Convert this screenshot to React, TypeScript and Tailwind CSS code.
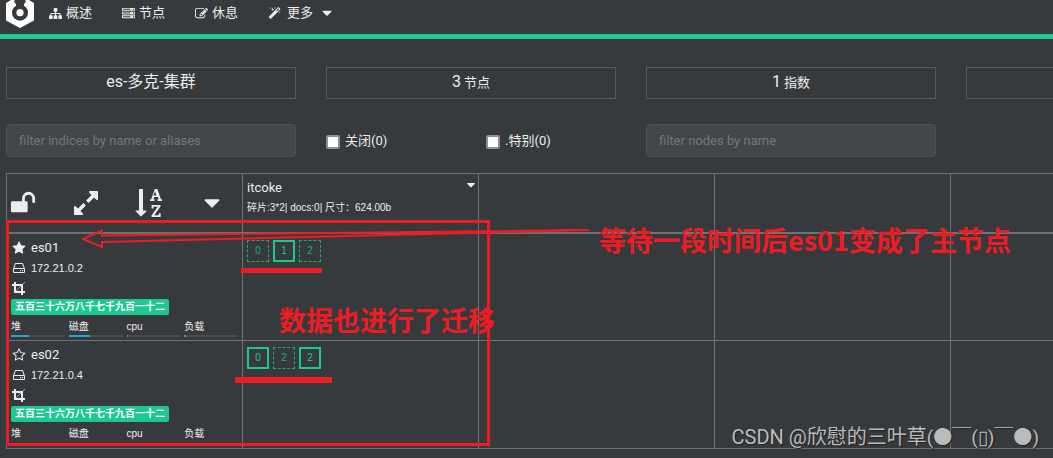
import type { ReactNode } from 'react'
import clsx from 'clsx'

const PATHS = {
  sitemap:
    'M1792 1248v320q0 40-28 68t-68 28h-320q-40 0-68-28t-28-68v-320q0-40 28-68t68-28h96v-192h-512v192h96q40 0 68 28t28 68v320q0 40-28 68t-68 28h-320q-40 0-68-28t-28-68v-320q0-40 28-68t68-28h96v-192h-512v192h96q40 0 68 28t28 68v320q0 40-28 68t-68 28h-320q-40 0-68-28t-28-68v-320q0-40 28-68t68-28h96v-192q0-52 38-90t90-38h512v-192h-96q-40 0-68-28t-28-68v-320q0-40 28-68t68-28h320q40 0 68 28t28 68v320q0 40-28 68t-68 28h-96v192h512q52 0 90 38t38 90v192h96q40 0 68 28t28 68z',
  server:
    'M128 1408h1024v-128h-1024v128zm0-512h1024v-128h-1024v128zm1568 448q0-40-28-68t-68-28-68 28-28 68 28 68 68 28 68-28 28-68zm-1568-960h1024v-128h-1024v128zm1568 448q0-40-28-68t-68-28-68 28-28 68 28 68 68 28 68-28 28-68zm0-512q0-40-28-68t-68-28-68 28-28 68 28 68 68 28 68-28 28-68zm96 832v384h-1792v-384h1792zm0-512v384h-1792v-384h1792zm0-512v384h-1792v-384h1792z',
  edit:
    'M888 1184l116-116-152-152-116 116v56h96v96h56zm440-720q-16-16-33 1l-350 350q-17 17-1 33t33-1l350-350q17-17 1-33zm80 594v190q0 119-84.5 203.5t-203.5 84.5h-832q-119 0-203.5-84.5t-84.5-203.5v-832q0-119 84.5-203.5t203.5-84.5h832q63 0 117 25 15 7 18 23 3 17-9 29l-49 49q-14 14-32 8-23-6-45-6h-832q-66 0-113 47t-47 113v832q0 66 47 113t113 47h832q66 0 113-47t47-113v-126q0-13 9-22l64-64q15-15 35-7t20 29zm-96-738l288 288-672 672h-288v-288zm444 132l-92 92-288-288 92-92q28-28 68-28t68 28l152 152q28 28 28 68t-28 68z',
  magic:
    'M1254 581l293-293-107-107-293 293zm447-293q0 27-18 45l-1286 1286q-18 18-45 18t-45-18l-198-198q-18-18-18-45t18-45l1286-1286q18-18 45-18t45 18l198 198q18 18 18 45zm-1351-190l98 30-98 30-30 98-30-98-98-30 98-30 30-98zm350 162l196 60-196 60-60 196-60-196-196-60 196-60 60-196zm930 478l98 30-98 30-30 98-30-98-98-30 98-30 30-98zm-640-640l98 30-98 30-30 98-30-98-98-30 98-30 30-98z',
  unlock:
    'M1728 576v256q0 26-19 45t-45 19h-64q-26 0-45-19t-19-45v-256q0-106-75-181t-181-75-181 75-75 181v192h96q40 0 68 28t28 68v576q0 40-28 68t-68 28h-960q-40 0-68-28t-28-68v-576q0-40 28-68t68-28h672v-192q0-185 131.5-316.5t316.5-131.5 316.5 131.5 131.5 316.5z',
  expand:
    'M883 1056q0 13-10 23l-332 332 144 144q19 19 19 45t-19 45-45 19h-448q-26 0-45-19t-19-45v-448q0-26 19-45t45-19 45 19l144 144 332-332q10-10 23-10t23 10l114 114q10 10 10 23zm781-864v448q0 26-19 45t-45 19-45-19l-144-144-332 332q-10 10-23 10t-23-10l-114-114q-10-10-10-23t10-23l332-332-144-144q-19-19-19-45t19-45 45-19h448q26 0 45 19t19 45z',
  sort:
    'M1191 408h177l-72-218-12-47q-2-16-2-20h-4l-3 20q0 1-3.5 18t-7.5 29zm-455 1000q0 12-10 24l-319 319q-10 9-23 9-12 0-23-9l-320-320q-15-16-7-35 8-20 30-20h192v-1376q0-14 9-23t23-9h192q14 0 23 9t9 23v1376h192q14 0 23 9t9 23zm904 153v231h-584v-90l369-529q12-18 21-27l11-9v-3q-2 0-6.5.5t-7.5.5q-12 3-30 3h-232v115h-120v-229h567v89l-369 530q-6 8-21 26l-11 11v2l14-2q9-2 30-2h248v-119h121zm89-898v106h-288v-106h75l-47-144h-243l-47 144h75v106h-287v-106h70l230-662h162l230 662h70z',
  caret: 'M1408 704q0 26-19 45l-448 448q-19 19-45 19t-45-19l-448-448q-19-19-19-45t19-45 45-19h896q26 0 45 19t19 45z',
  star:
    'M1728 647q0 22-26 48l-363 354 86 500q1 7 1 20 0 21-10.5 35.5t-30.5 14.5q-19 0-40-12l-449-236-449 236q-22 12-40 12-21 0-31.5-14.5t-10.5-35.5q0-6 2-20l86-500-364-354q-25-27-25-48 0-37 56-46l502-73 225-455q19-41 49-41t49 41l225 455 502 73q56 9 56 46z',
  starOutline:
    'M1201 1004l306-297-422-62-189-382-189 382-422 62 306 297-73 421 378-199 377 199zm527-357q0 22-26 48l-363 354 86 500q1 7 1 20 0 50-41 50-19 0-40-12l-449-236-449 236q-22 12-40 12-21 0-31.5-14.5t-10.5-35.5q0-6 2-20l86-500-364-354q-25-27-25-48 0-37 56-46l502-73 225-455q19-41 49-41t49 41l225 455 502 73q56 9 56 46z',
  disk:
    'M1168 1216q0 33-23.5 56.5t-56.5 23.5-56.5-23.5-23.5-56.5 23.5-56.5 56.5-23.5 56.5 23.5 23.5 56.5zm256 0q0 33-23.5 56.5t-56.5 23.5-56.5-23.5-23.5-56.5 23.5-56.5 56.5-23.5 56.5 23.5 23.5 56.5zm112 160v-320q0-13-9.5-22.5t-22.5-9.5h-1216q-13 0-22.5 9.5t-9.5 22.5v320q0 13 9.5 22.5t22.5 9.5h1216q13 0 22.5-9.5t9.5-22.5zm-1230-480h1180l-157-482q-4-13-16-21.5t-26-8.5h-782q-14 0-26 8.5t-16 21.5zm1358 160v320q0 66-47 113t-113 47h-1216q-66 0-113-47t-47-113v-320q0-25 16-75l197-606q17-53 63-86t101-33h782q55 0 101 33t63 86l197 606q16 50 16 75z',
  crop:
    'M557 1280h595v-595zm-45-45l595-595h-595v595zm1152 77v192q0 14-9 23t-23 9h-224v224q0 14-9 23t-23 9h-192q-14 0-23-9t-9-23v-224h-864q-14 0-23-9t-9-23v-864h-224q-14 0-23-9t-9-23v-192q0-14 9-23t23-9h224v-224q0-14 9-23t23-9h192q14 0 23 9t9 23v224h851l246-247q10-9 23-9t23 9q9 10 9 23t-9 23l-247 246v851h224q14 0 23 9t9 23z',
}

type IconName = keyof typeof PATHS

const NAV: { icon: IconName; label: string; more?: boolean }[] = [
  { icon: 'sitemap', label: '概述' },
  { icon: 'server', label: '节点' },
  { icon: 'edit', label: '休息' },
  { icon: 'magic', label: '更多', more: true },
]

type Shard = { id: number; replica?: boolean }
type Node = {
  name: string
  ip: string
  master?: boolean
  // percent used, in the order of METRICS
  usage?: number[]
  shards: Shard[]
}

const METRICS = ['堆', '磁盘', 'cpu', '负载']

const NODES: Node[] = [
  {
    name: 'es01',
    ip: '172.21.0.2',
    master: true,
    usage: [33, 39, 2, 4],
    shards: [{ id: 0, replica: true }, { id: 1 }, { id: 2, replica: true }],
  },
  {
    name: 'es02',
    ip: '172.21.0.4',
    shards: [{ id: 0 }, { id: 2, replica: true }, { id: 2 }],
  },
]

const CELL = 'border-l border-[#6e7275] p-0 align-top'
const SMALL = "font-['Liberation_Sans','Noto_Sans_CJK_SC',sans-serif] text-[10px]"

export default function App() {
  return (
    <div className="relative min-h-dvh overflow-hidden bg-[#373a3c] font-['Roboto','Noto_Sans_CJK_SC',sans-serif] text-[13px] leading-5 text-[#ebedef]">
      <header className="flex h-[39px] items-start border-b-[5px] border-[#1cc88f] pl-[6px]">
        <Logo />
        <nav className="ml-[15px] flex gap-[30px] pt-[3px]">
          {NAV.map(({ icon, label, more }) => (
            <a key={label} href="#" className={clsx('flex items-center', more ? 'gap-[6px]' : 'gap-1')}>
              <Icon name={icon} className="size-[13px]" />
              <span>{label}</span>
              {more && <Icon name="caret" className="size-4" />}
            </a>
          ))}
        </nav>
      </header>

      <main className="pl-[6px]">
        <div className="mt-7 flex gap-[30px]">
          <Stat><span className="text-base">es-多克-集群</span></Stat>
          <Stat><span className="text-base">3</span> 节点</Stat>
          <Stat><span className="text-base">1</span> 指数</Stat>
          <Stat />
        </div>

        <div className="mt-[25px] flex items-center gap-[30px]">
          <Filter label="filter indices by name or aliases" />
          <div className="flex w-[290px] shrink-0">
            <Check label="关闭(0)" />
            <Check label=".特别(0)" />
          </div>
          <Filter label="filter nodes by name" />
        </div>

        <table className="mt-4 w-full table-fixed border-collapse border-y border-[#6e7275]">
          <colgroup>
            <col className="w-[236px]" />
            <col className="w-[236px]" />
            <col className="w-[236px]" />
            <col className="w-[236px]" />
            <col />
          </colgroup>
          <thead>
            <tr className="h-[59px] border-b-2 border-[#6e7275]">
              <th className={CELL}>
                <div className="flex items-center justify-between pt-[15px] pr-[17px] pl-[3px]">
                  <Tool icon="unlock" label="unlock" />
                  <Tool icon="expand" label="expand" wide />
                  <Tool icon="sort" label="sort" wide />
                  <Tool icon="caret" label="options" />
                </div>
              </th>
              <th className={clsx(CELL, 'text-left font-normal')}>
                <div className="flex justify-between pt-1 pl-1">
                  <span>itcoke</span>
                  <Icon name="caret" className="size-[14px]" />
                </div>
                <div className={clsx(SMALL, 'pl-1')}>碎片:3*2| docs:0| 尺寸：624.00b</div>
              </th>
              <th className={CELL} />
              <th className={CELL} />
              <th className={CELL} />
            </tr>
          </thead>
          <tbody>
            {NODES.map(node => (
              <tr key={node.name} className="h-[108px] border-b border-[#6e7275]">
                <td className={CELL}><NodeInfo node={node} /></td>
                <td className={CELL}>
                  <div className="flex gap-1 pt-[6px] pl-1">
                    {node.shards.map((s, i) => (
                      <span
                        key={i}
                        className={clsx(
                          SMALL,
                          'flex size-[22px] items-center justify-center text-[#1cc88f]',
                          s.replica ? 'border border-dashed border-[#1cc88f] opacity-75' : 'border-2 border-[#1cc88f]'
                        )}
                      >
                        {s.id}
                      </span>
                    ))}
                  </div>
                </td>
                <td className={CELL} />
                <td className={CELL} />
                <td className={CELL} />
              </tr>
            ))}
          </tbody>
        </table>
      </main>

      <Annotations />
      <div className="absolute right-[14px] bottom-[6px] text-xl leading-7 whitespace-nowrap text-[#b9bbbc] [text-shadow:1px_1px_1px_#222]">
        CSDN @欣慰的三叶草
        <span className="text-[19px]">
          (<span className="font-['Noto_Sans_CJK_SC',sans-serif]">●￣</span>(▯)
          <span className="font-['Noto_Sans_CJK_SC',sans-serif]">￣●</span>)
        </span>
      </div>
    </div>
  )
}

function Icon({ name, className }: { name: IconName; className?: string }) {
  return (
    <svg viewBox="0 0 1792 1792" fill="currentColor" aria-hidden="true" className={clsx('shrink-0', className)}>
      <path d={PATHS[name]} />
    </svg>
  )
}

function Logo() {
  return (
    <svg width="28" height="28" viewBox="0 0 28 28" aria-hidden="true">
      <path d="M0 3L5 0h18l5 3v17.500L14 28 0 20.500z" fill="#fff" />
      <circle cx="14" cy="12.700" r="8" fill="#373a3c" />
      <path d="M8.500 0h11v2.500L18 4v3h-8V4L8.500 2.500z" fill="#373a3c" />
      <circle cx="14" cy="12.700" r="3.600" fill="#fff" />
    </svg>
  )
}

function Stat({ children }: { children?: ReactNode }) {
  return (
    <div className="h-8 w-[290px] shrink-0 border border-[#55595c] text-center leading-[30px]">{children}</div>
  )
}

function Filter({ label }: { label: string }) {
  return (
    <input
      type="text"
      aria-label={label}
      placeholder={label}
      className="h-[33px] w-[290px] shrink-0 rounded border border-[#4e5052] bg-[#434648] px-3 placeholder:text-[#707679]"
    />
  )
}

function Check({ label }: { label: string }) {
  return (
    <label className="flex w-[160px] shrink-0 items-center gap-[5px]">
      <input type="checkbox" className="mt-[3px] size-[14px] appearance-none rounded-xs border-2 border-[#8f8f9d] bg-white" />
      {label}
    </label>
  )
}

function Tool({ icon, label, wide }: { icon: IconName; label: string; wide?: boolean }) {
  return (
    <button type="button" aria-label={label}>
      <Icon name={icon} className={wide ? 'size-7' : 'size-[26px]'} />
    </button>
  )
}

function NodeInfo({ node }: { node: Node }) {
  return (
    <div className="px-1 pt-1">
      <div className="flex items-center gap-[5px] pl-px">
        <Icon name={node.master ? 'star' : 'starOutline'} className="size-[14px]" />
        <span>{node.name}</span>
      </div>
      <div className="flex items-center gap-[5px] pl-px font-['Liberation_Sans',sans-serif] text-[11px]">
        <Icon name="disk" className="size-[14px]" />
        <span>{node.ip}</span>
      </div>
      <div className="flex h-5 items-center pl-px">
        <Icon name="crop" className="size-[14px]" />
      </div>
      <div className="mt-px w-[158px] rounded-xs bg-[#1cc88f] text-center text-[10px] leading-4 font-bold text-white">
        五百三十六万八千七千九百一十二
      </div>
      <div className={clsx(SMALL, 'mt-1 grid grid-cols-4 gap-1 leading-4')}>
        {METRICS.map((m, i) => (
          <div key={m}>
            {m}
            {node.usage && (
              <div className="h-[2px] bg-[#4a4c4e]">
                <div className="h-full bg-[#1ca8dd]" style={{ width: `${node.usage[i]}%` }} />
              </div>
            )}
          </div>
        ))}
      </div>
    </div>
  )
}

// hand-drawn marks laid over the page
function Annotations() {
  return (
    <div className="pointer-events-none absolute inset-0 font-['Noto_Sans_CJK_SC',sans-serif] text-[27px] leading-9 font-bold whitespace-nowrap text-[#ed1c24]">
      <div className="absolute top-[220px] left-[6px] h-[226px] w-[484px] border-3 border-[#ed1c24]" />
      <div className="absolute top-[268px] left-[241px] h-[5px] w-[81px] bg-[#ed1c24]" />
      <div className="absolute top-[377px] left-[235px] h-[6px] w-[97px] bg-[#ed1c24]" />
      <svg className="absolute top-[226px] left-[80px]" width="512" height="24" fill="none" stroke="#ed1c24" strokeWidth="2" aria-hidden="true">
        <path d="M509 4L22 9.500V4.500L3 13l19 8v-5L509 4" />
      </svg>
      <p className="absolute top-[302px] left-[279px]">数据也进行了迁移</p>
      <p className="absolute top-[222px] left-[599px]">等待一段时间后es01变成了主节点</p>
    </div>
  )
}
